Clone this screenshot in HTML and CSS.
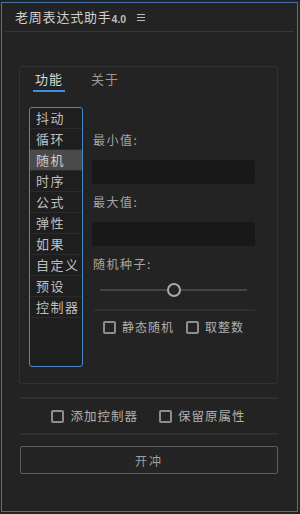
FILE: index.html
```html
<!DOCTYPE html>
<html lang="zh-CN">
<head>
    <meta charset="UTF-8">
    <meta name="viewport" content="width=device-width, initial-scale=1.0">
    <title>老周表达式助手</title>
    <link rel="stylesheet" href="styles.css">
</head>
<body>
    <div class="window">
        <div class="titlebar">
            <span class="title">老周表达式助手</span><span class="version">4.0</span>
            <svg class="menu-icon" width="10" height="8" viewBox="0 0 10 8">
                <path d="M1 0.5H9M1 3.5H9M1 6.5H9" stroke="#bdbdbd" stroke-width="1"/>
            </svg>
        </div>

        <div class="main">
            <div class="panel">
                <div class="tabs">
                    <span class="tab active">功能</span>
                    <span class="tab">关于</span>
                </div>
                <div class="panel-body">
                    <ul class="list">
                        <li>抖动</li>
                        <li>循环</li>
                        <li class="selected">随机</li>
                        <li>时序</li>
                        <li>公式</li>
                        <li>弹性</li>
                        <li>如果</li>
                        <li>自定义</li>
                        <li>预设</li>
                        <li>控制器</li>
                    </ul>
                    <div class="options">
                        <p class="label">最小值:</p>
                        <div class="field"></div>
                        <p class="label">最大值:</p>
                        <div class="field"></div>
                        <p class="label">随机种子:</p>
                        <div class="slider">
                            <div class="track"></div>
                            <div class="thumb"></div>
                        </div>
                        <div class="rule"></div>
                        <div class="checks">
                            <label class="check"><span class="box"></span>静态随机</label>
                            <label class="check"><span class="box"></span>取整数</label>
                        </div>
                    </div>
                </div>
            </div>

            <div class="rule wide"></div>
            <div class="checks bottom-checks">
                <label class="check"><span class="box"></span>添加控制器</label>
                <label class="check"><span class="box"></span>保留原属性</label>
            </div>
            <div class="rule wide"></div>
            <button class="go">开冲</button>
        </div>
    </div>
</body>
</html>
```

FILE: styles.css
```css
* {
    box-sizing: border-box;
}

body {
    margin: 0;
    background-color: #232323;
    font-family: "Noto Sans CJK SC", "Noto Sans", sans-serif;
    color: #a8a8a8;
}

.window {
    width: 297px;
    height: 510px;
    margin: 2px 0 0 1px;
    border: 1px solid #4274ab;
    background-color: #232323;
}

.titlebar {
    height: 29px;
    margin: 0 3px;
    padding-left: 10px;
    border-bottom: 1px solid #363636;
    display: flex;
    align-items: center;
}

.title {
    font-size: 13px;
    letter-spacing: 0.8px;
    color: #cfcfcf;
    line-height: 18px;
}

.version {
    font-family: "Liberation Sans", Arial, sans-serif;
    font-size: 10.5px;
    font-weight: bold;
    color: #bdbdbd;
    margin-top: 3px;
}

.menu-icon {
    margin-left: 10px;
    margin-top: 1px;
}

.main {
    padding: 34px 19px 0 17px;
}

/* panel */
.panel {
    height: 318px;
    border: 1px solid #323232;
    border-radius: 3px;
    padding: 3px 9px 0 9px;
}

.tabs {
    display: flex;
    gap: 24px;
    padding-left: 4px;
}

.tab {
    font-size: 13px;
    line-height: 18px;
    letter-spacing: 1px;
    padding: 0 2px 2px 2px;
    color: #9a9a9a;
    border-bottom: 2px solid transparent;
}

.tab.active {
    color: #d8d8d8;
    border-bottom-color: #3b8fe0;
}

.panel-body {
    display: flex;
    gap: 9px;
    margin-top: 15px;
}

.list {
    list-style: none;
    margin: 0;
    padding: 0;
    width: 54px;
    height: 260px;
    border: 1px solid #4a86c8;
    border-radius: 3px;
    background-color: #1e1e1e;
}

.list li {
    height: 21px;
    line-height: 20px;
    padding-left: 6px;
    font-size: 13px;
    letter-spacing: 1.5px;
    color: #bfbfbf;
    border-bottom: 1px solid #2b2b2b;
    white-space: nowrap;
}

.list li.selected {
    background-color: #4a4a4a;
    color: #cccccc;
}

.options {
    width: 163px;
    padding-top: 24px;
}

.label {
    margin: 0;
    padding-left: 1px;
    font-size: 12px;
    line-height: 18px;
    letter-spacing: 1.5px;
    color: #a6a6a6;
}

.field {
    height: 24px;
    margin: 11px 0 9px;
    background-color: #181818;
    border-radius: 2px;
}

.slider {
    position: relative;
    height: 20px;
    margin: 7px 8px 9px;
    display: flex;
    align-items: center;
}

.track {
    width: 100%;
    height: 2px;
    background-color: #444;
}

.thumb {
    position: absolute;
    left: 50%;
    top: 3px;
    width: 14px;
    height: 14px;
    margin-left: -7px;
    border: 2px solid #a9a9a9;
    border-radius: 50%;
    background-color: #232323;
}

.rule {
    height: 2px;
    background-color: #2f2f2f;
    margin: 0 0 0 2px;
}

.checks {
    display: flex;
    gap: 12px;
    margin-top: 8px;
    padding-left: 11px;
}

.check {
    display: flex;
    align-items: center;
    gap: 6px;
    font-size: 12px;
    line-height: 16px;
    letter-spacing: 1px;
    color: #b0b0b0;
}

.box {
    width: 13px;
    height: 13px;
    border: 2px solid #8e8e8e;
    border-radius: 2px;
}

/* bottom */
.rule.wide {
    margin: 13px 0 0 1px;
}

.bottom-checks {
    justify-content: center;
    gap: 21px;
    margin-top: 9px;
    padding-left: 0;
    margin-bottom: -4px;
}

.bottom-checks .check {
    font-size: 12.5px;
}

.go {
    display: block;
    width: 258px;
    height: 28px;
    margin: 11px 0 0 1px;
    background-color: #242424;
    border: 1px solid #5c5c5c;
    border-radius: 2px;
    font-family: "Noto Sans CJK SC", sans-serif;
    font-size: 12px;
    letter-spacing: 2px;
    color: #a0a0a0;
}
```
